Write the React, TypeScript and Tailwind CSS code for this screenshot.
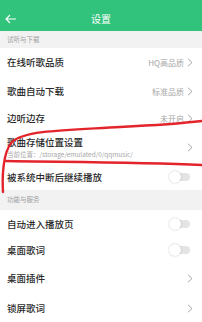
import React from 'react'

const font = { fontFamily: '"Noto Sans CJK SC", "Noto Sans", sans-serif' }

function Chevron() {
  return (
    <svg width="6" height="9" viewBox="0 0 6 9" className="ml-[3px]">
      <path d="M1 0.8 L5 4.5 L1 8.2" fill="none" stroke="#a8a8a8" strokeWidth="1" />
    </svg>
  )
}

function Toggle() {
  return (
    <div className="relative mr-[12px] h-[12px] w-[21px]">
      <div className="absolute left-[3px] top-[2px] h-[8px] w-[18px] rounded-full bg-[#e4e4e4]" />
      <div className="absolute left-0 top-0 h-[12px] w-[12px] rounded-full bg-white shadow-[0_0_2px_rgba(0,0,0,0.25)]" />
    </div>
  )
}

function Row({ title, value, arrow, toggle, h }: { title: string; value?: string; arrow?: boolean; toggle?: boolean; h: string }) {
  return (
    <div className={`flex items-center justify-between bg-white pl-[7px] ${h}`}>
      <span className="text-[9.5px] font-medium text-[#2a2a2a]">{title}</span>
      <div className="flex items-center">
        {value && <span className="text-[8px] text-[#a6a6a6]">{value}</span>}
        {arrow && <div className="mr-[9px] flex"><Chevron /></div>}
        {toggle && <Toggle />}
      </div>
    </div>
  )
}

function Section({ label, h }: { label: string; h: string }) {
  return (
    <div className={`flex items-center bg-[#f2f2f2] pl-[7px] ${h}`}>
      <span className="text-[6.5px] text-[#a0a0a0]">{label}</span>
    </div>
  )
}

export default function App() {
  return (
    <div className="relative h-[322px] w-[202px] overflow-hidden bg-white" style={font}>
      <div className="relative flex h-[31px] items-center justify-center bg-[#31c27c] pt-[6px]">
        <svg width="12" height="10" viewBox="0 0 12 10" className="absolute left-[5px] top-[14px]">
          <path d="M11 5 H1.2 M5 1 L1 5 L5 9" fill="none" stroke="#fff" strokeWidth="1.1" />
        </svg>
        <span className="text-[10px] text-white">设置</span>
      </div>
      <Section label="试听与下载" h="h-[17px]" />
      <Row title="在线听歌品质" value="HQ高品质" arrow h="h-[29px]" />
      <Row title="歌曲自动下载" value="标准品质" arrow h="h-[29px]" />
      <Row title="边听边存" value="未开启" arrow h="h-[25px]" />
      <div className="flex h-[33px] items-center justify-between bg-white pl-[7px]">
        <div className="flex flex-col">
          <span className="text-[9.5px] font-medium leading-[13px] text-[#2a2a2a]">歌曲存储位置设置</span>
          <span className="text-[6.5px] leading-[10px] text-[#a6a6a6]">当前位置：/storage/emulated/0/qqmusic/</span>
        </div>
        <div className="mr-[9px] flex"><Chevron /></div>
      </div>
      <Row title="被系统中断后继续播放" toggle h="h-[26px]" />
      <Section label="功能与服务" h="h-[20px]" />
      <Row title="自动进入播放页" toggle h="h-[28px]" />
      <Row title="桌面歌词" toggle h="h-[24px]" />
      <Row title="桌面插件" arrow h="h-[32px]" />
      <Row title="锁屏歌词" arrow h="h-[28px]" />

      <svg width="202" height="322" viewBox="0 0 202 322" className="pointer-events-none absolute left-0 top-0">
        <path d="M3 192 C2 176 3 152 12 142 C24 130 70 130 120 127 C160 125 185 123 202 121" fill="none" stroke="#e3242b" strokeWidth="2.4" strokeLinecap="round" />
        <path d="M6 161 C60 162 140 162 202 165" fill="none" stroke="#e3242b" strokeWidth="2.4" strokeLinecap="round" />
      </svg>
    </div>
  )
}
